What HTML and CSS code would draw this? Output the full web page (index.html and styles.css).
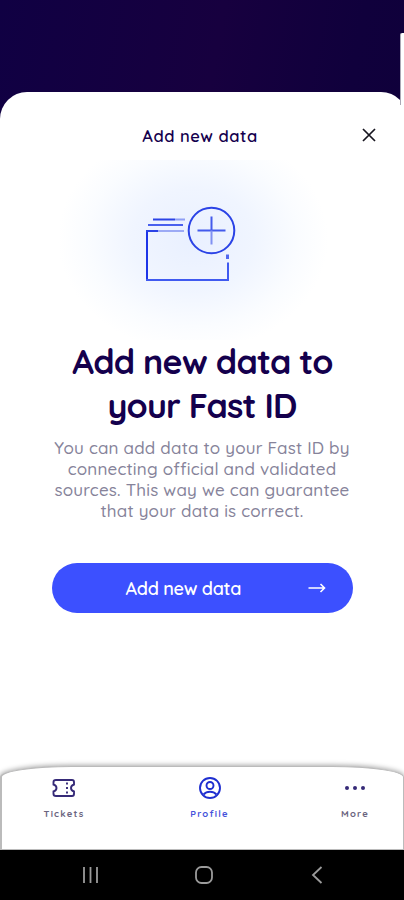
FILE: index.html
```html
<!DOCTYPE html>
<html lang="en">

<head>
    <meta charset="UTF-8">
    <meta name="viewport" content="width=device-width, initial-scale=1.0">
    <title>Add new data</title>
    <link rel="stylesheet" href="styles.css">
</head>

<body>

    <div class="screen">
        <div class="scroll-edge"></div>

        <main class="sheet">
            <header class="sheet-header">
                <span class="sheet-title">Add new data</span>
                <svg class="close" width="16" height="16" viewBox="0 0 16 16">
                    <path d="M2 2L14 14M14 2L2 14" />
                </svg>
            </header>

            <div class="illustration">
                <svg width="92" height="78" viewBox="0 0 92 78" fill="none" stroke="#2b43e6" stroke-width="2">
                    <path d="M3 74V25.500" stroke="#1d35e8" />
                    <path d="M2 26H14" />
                    <path d="M14 26H40" stroke="#9caaf5" />
                    <path d="M4 20H39" stroke="#4960ee" />
                    <path d="M9 14.500H31" />
                    <path d="M31 14.500H41" stroke="#8f9ff5" />
                    <path d="M2 75H84V57.500" stroke="#405af0" />
                    <path d="M83.500 49.500V54" stroke="#5269ef" stroke-width="3" />
                    <circle cx="67.500" cy="25.500" r="22.800" />
                    <path d="M53.500 25.500H81.500M67.500 11.500V25.500" stroke="#435aec" />
                    <path d="M67.500 25.500V39.500" stroke="#8091f2" />
                </svg>
            </div>

            <h1>Add new data to<br>your Fast ID</h1>
            <p class="intro">
                You can add data to your Fast ID by<br>
                connecting official and validated<br>
                sources. This way we can guarantee<br>
                that your data is correct.
            </p>

            <button class="add-button">
                <span>Add new data</span>
                <svg width="20" height="14" viewBox="0 0 20 14">
                    <path d="M1.500 7H17.500M13.500 3L17.500 7L13.500 11" />
                </svg>
            </button>
        </main>

        <nav class="tabs">
            <a class="tab">
                <svg width="26" height="24" viewBox="0 0 26 24">
                    <path d="M5 4H21Q23 4 23 6V8.500Q20 9.500 20 12Q20 14.500 23 15.500V18Q23 20 21 20H5Q2.500 20 2.500 18V15.500Q5.500 14.500 5.500 12Q5.500 9.500 2.500 8.500V6Q2.500 4 5 4Z" />
                    <path d="M16 6.500V8.500M16 11V13M16 15.500V17.500" />
                </svg>
                <span>Tickets</span>
            </a>
            <a class="tab active">
                <svg width="26" height="24" viewBox="0 0 26 24">
                    <circle cx="13" cy="12" r="10" />
                    <circle cx="13" cy="9.500" r="3.500" />
                    <path d="M6.500 18.500Q9 15.800 13 15.800T19.500 18.500" />
                </svg>
                <span>Profile</span>
            </a>
            <a class="tab">
                <svg class="dots" width="26" height="24" viewBox="0 0 26 24">
                    <circle cx="5" cy="12" r="2" />
                    <circle cx="13" cy="12" r="2" />
                    <circle cx="21" cy="12" r="2" />
                </svg>
                <span>More</span>
            </a>
        </nav>

        <footer class="system-bar">
            <svg width="20" height="20" viewBox="0 0 20 20">
                <path d="M3 2V18M9.500 2V18M16 2V18" />
            </svg>
            <svg width="20" height="20" viewBox="0 0 20 20">
                <rect x="2" y="2" width="16" height="16" rx="5.500" />
            </svg>
            <svg width="20" height="20" viewBox="0 0 20 20">
                <path d="M14.500 2L6 10L14.500 18" />
            </svg>
        </footer>
    </div>

</body>

</html>
```
FILE: styles.css
```css
body {
    margin: 0;
    font-family: Quicksand, Lato, sans-serif;
    color: #14004d;
}

.screen {
    position: relative;
    display: flex;
    flex-direction: column;
    box-sizing: border-box;
    width: 404px;
    height: 900px;
    padding-top: 92px;
    overflow: hidden;
    background: linear-gradient(100deg, #100043 0%, #17003f 40%, #10003c 65%, #0e0038 100%);
}

.scroll-edge {
    position: absolute;
    top: 33px;
    right: 0;
    width: 4px;
    height: 72px;
    box-sizing: border-box;
    border-left: 1px solid #aaa8b5;
    border-radius: 2px 0 0 0;
    background-color: #fff;
}

.sheet {
    flex: 1;
    display: flex;
    flex-direction: column;
    align-items: center;
    margin-right: -4px;
    padding-right: 4px;
    border-radius: 27px 27px 0 0;
    background-color: #fff;
}

.sheet-header {
    display: grid;
    grid-template-columns: 44px 1fr 44px;
    align-items: center;
    width: 350px;
    height: 68px;
    padding-top: 18px;
    box-sizing: border-box;
}

.sheet-title {
    grid-column: 2;
    margin-left: -4px;
    text-align: center;
    font-size: 16.5px;
    font-weight: 600;
    letter-spacing: 0.5px;
}

.close {
    justify-self: end;
    fill: none;
    stroke: #17151f;
    stroke-width: 1.7;
}

.illustration {
    display: flex;
    justify-content: center;
    box-sizing: border-box;
    width: 300px;
    height: 180px;
    padding: 45px 24px 0 0;
    background: radial-gradient(ellipse 135px 112px at 47% 44%, #e9f0ff 0%, #f0f5ff 45%, #fafcff 78%, #fff 100%);
}

h1 {
    margin: 0;
    text-align: center;
    font-size: 34px;
    line-height: 44px;
    font-weight: 700;
    letter-spacing: -0.8px;
    text-indent: 1px;
}

.intro {
    margin: 9px 0 0;
    text-align: center;
    font-size: 17px;
    line-height: 21px;
    font-weight: 500;
    letter-spacing: 0.2px;
    color: #86839a;
    white-space: nowrap;
}

.add-button {
    display: flex;
    align-items: center;
    justify-content: space-between;
    width: 301px;
    height: 50px;
    margin-top: 42px;
    padding: 0 26px 0 74px;
    border: none;
    border-radius: 25px;
    background-color: #3c50ff;
    color: #fff;
    font-family: inherit;
    font-size: 18px;
    font-weight: 600;
    letter-spacing: -0.3px;
}

.add-button svg {
    fill: none;
    stroke: #fff;
    stroke-width: 1.6;
}

.tabs {
    display: flex;
    justify-content: space-between;
    box-sizing: border-box;
    height: 84px;
    padding: 9px 16px 0 30px;
    border: 1px solid #bbb;
    border-left: 2px solid #bbb;
    border-radius: 72px 72px 0 0 / 11px 11px 0 0;
    background-color: #fff;
    /* second shadow fills the corners behind the curve */
    box-shadow: 0 -1px 5px rgba(0, 0, 0, 0.35), 0 0 0 14px #fff;
}

.tab {
    display: flex;
    flex-direction: column;
    align-items: center;
    width: 64px;
    font-size: 9.5px;
    line-height: 12px;
    font-weight: 700;
    letter-spacing: 1.2px;
    color: #6b6580;
}

.tab svg {
    margin-bottom: 7px;
    fill: none;
    stroke: #362a78;
    stroke-width: 1.9;
}

.tab .dots {
    fill: #362a78;
    stroke: none;
}

.tab.active {
    color: #4653db;
}

.tab.active svg {
    stroke: #1f2fd0;
}

.system-bar {
    z-index: 1;
    display: flex;
    justify-content: space-between;
    align-items: center;
    box-sizing: border-box;
    height: 50px;
    padding: 0 77px 0 81px;
    background-color: #000;
}

.system-bar svg {
    fill: none;
    stroke: #9b9b9b;
    stroke-width: 1.8;
}
```
